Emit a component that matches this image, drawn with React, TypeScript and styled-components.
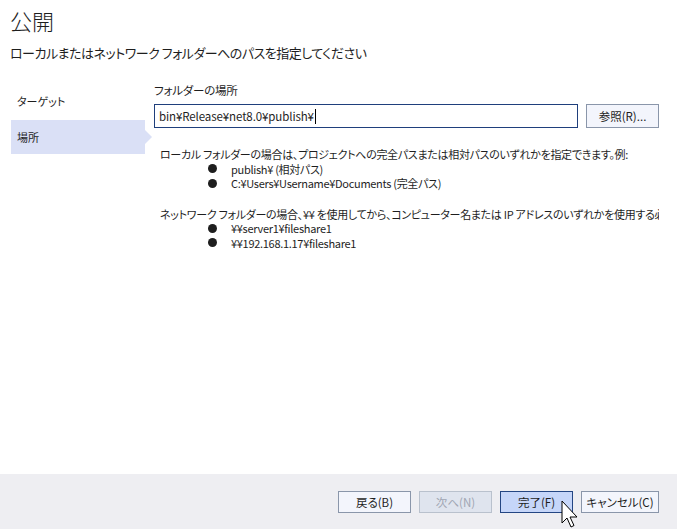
import styled, { createGlobalStyle } from 'styled-components';

const GlobalStyle = createGlobalStyle`
  html, body {
    margin: 0;
    padding: 0;
    background: #ffffff;
  }
  body {
    font-family: "Noto Sans CJK JP", "Noto Sans", sans-serif;
    font-feature-settings: "palt";
    color: #1e1e1e;
  }
`;

const Window = styled.div`
  width: 677px;
  height: 529px;
  display: flex;
  flex-direction: column;
  position: relative;
  overflow: hidden;
  background: #ffffff;
`;

const Header = styled.header`
  padding: 4px 10px 0 10px;
  display: flex;
  flex-direction: column;
`;

const Title = styled.h1`
  margin: 0;
  font-size: 22px;
  font-weight: 300;
  line-height: 32px;
  color: #1e1e1e;
`;

const Subtitle = styled.div`
  margin-top: 7px;
  font-size: 13px;
  letter-spacing: -0.5px;
  line-height: 20px;
`;

const Body = styled.main`
  flex: 1;
  display: flex;
  padding-left: 11px;
`;

const Nav = styled.nav`
  width: 134px;
  padding-top: 21px;
  display: flex;
  flex-direction: column;
  gap: 2px;
`;

const NavItem = styled.div<{ $selected?: boolean }>`
  position: relative;
  height: 34px;
  display: flex;
  align-items: center;
  padding-left: 6px;
  font-size: 11px;
  background: ${(p) => (p.$selected ? '#dae0f6' : 'transparent')};
  &::after {
    content: '';
    display: ${(p) => (p.$selected ? 'block' : 'none')};
    position: absolute;
    right: -7px;
    top: 10px;
    border-top: 7px solid transparent;
    border-bottom: 7px solid transparent;
    border-left: 7px solid #dae0f6;
  }
`;

const Content = styled.section`
  flex: 1;
  padding: 19px 18px 0 9px;
  display: flex;
  flex-direction: column;
  min-width: 0;
`;

const Label = styled.label`
  font-size: 11.5px;
  letter-spacing: -0.2px;
  line-height: 16px;
`;

const PathRow = styled.div`
  margin-top: 6px;
  display: flex;
  gap: 8px;
`;

const PathInput = styled.div`
  flex: 1;
  height: 24px;
  box-sizing: border-box;
  border: 1px solid #1f3f7c;
  display: flex;
  align-items: center;
  padding-left: 4px;
  font-size: 11.5px;
  letter-spacing: -0.1px;
`;

const Caret = styled.span`
  display: inline-block;
  width: 1px;
  height: 15px;
  background: #000;
  margin-left: 1px;
`;

const Button = styled.button<{ $variant?: 'primary' | 'disabled'; $width?: number }>`
  box-sizing: border-box;
  height: 22px;
  width: ${(p) => p.$width ?? 73}px;
  padding: 0;
  font-family: inherit;
  font-feature-settings: "palt";
  font-size: 11.5px;
  border: 1px solid
    ${(p) =>
      p.$variant === 'primary' ? '#244683' : p.$variant === 'disabled' ? '#b9c1cd' : '#8a96aa'};
  background: ${(p) =>
    p.$variant === 'primary' ? '#c6d6f9' : p.$variant === 'disabled' ? '#dfe4ee' : '#f3f5fc'};
  color: ${(p) => (p.$variant === 'disabled' ? '#9fa6b3' : '#1e1e1e')};
  display: flex;
  align-items: center;
  justify-content: center;
`;

const BrowseButton = styled(Button)`
  height: 24px;
`;

const Notes = styled.div`
  margin-top: 19px;
  padding-left: 6px;
  font-size: 11px;
  letter-spacing: -0.3px;
  line-height: 14.5px;
  white-space: nowrap;
  overflow: hidden;
  display: flex;
  flex-direction: column;
  gap: 16px;
`;

const Paragraph = styled.div`
  display: flex;
  flex-direction: column;
`;

const BulletList = styled.ul`
  margin: 0;
  padding: 0 0 0 48px;
  list-style: none;
`;

const Bullet = styled.li`
  display: flex;
  align-items: center;
  gap: 14px;
  &::before {
    content: '';
    width: 9px;
    height: 9px;
    border-radius: 50%;
    background: #1e1e1e;
  }
`;

const Footer = styled.footer`
  height: 55px;
  background: #eeeef2;
  display: flex;
  align-items: center;
  justify-content: flex-end;
  gap: 8px;
  padding-right: 18px;
`;

const Cursor = styled.svg`
  position: absolute;
  left: 561px;
  top: 500px;
`;

export default function App() {
  return (
    <>
      <GlobalStyle />
      <Window>
        <Header>
          <Title>公開</Title>
          <Subtitle>ローカルまたはネットワーク フォルダーへのパスを指定してください</Subtitle>
        </Header>
        <Body>
          <Nav>
            <NavItem>ターゲット</NavItem>
            <NavItem $selected>場所</NavItem>
          </Nav>
          <Content>
            <Label>フォルダーの場所</Label>
            <PathRow>
              <PathInput>
                bin¥Release¥net8.0¥publish¥
                <Caret />
              </PathInput>
              <BrowseButton>参照(R)...</BrowseButton>
            </PathRow>
            <Notes>
              <Paragraph>
                ローカル フォルダーの場合は、プロジェクトへの完全パスまたは相対パスのいずれかを指定できます。例:
                <BulletList>
                  <Bullet>publish¥ (相対パス)</Bullet>
                  <Bullet>C:¥Users¥Username¥Documents (完全パス)</Bullet>
                </BulletList>
              </Paragraph>
              <Paragraph>
                ネットワーク フォルダーの場合、¥¥ を使用してから、コンピューター名または IP アドレスのいずれかを使用する必要があります。例:
                <BulletList>
                  <Bullet>¥¥server1¥fileshare1</Bullet>
                  <Bullet>¥¥192.168.1.17¥fileshare1</Bullet>
                </BulletList>
              </Paragraph>
            </Notes>
          </Content>
        </Body>
        <Footer>
          <Button>戻る(B)</Button>
          <Button $variant="disabled">次へ(N)</Button>
          <Button $variant="primary">完了(F)</Button>
          <Button $width={78}>キャンセル(C)</Button>
        </Footer>
        <Cursor width="20" height="29" viewBox="0 0 20 29">
          <path
            d="M1 1 L1 23 L6 18 L10 27 L13 25.5 L9 17 L16 17 Z"
            fill="#ffffff"
            stroke="#000000"
            strokeWidth="1"
            strokeLinejoin="miter"
          />
        </Cursor>
      </Window>
    </>
  );
}
